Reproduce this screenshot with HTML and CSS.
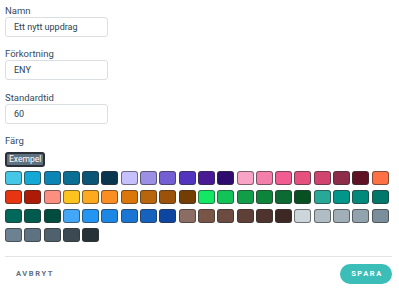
FILE: index.html
```html
<!DOCTYPE html>
<html lang="sv">
<head>
<meta charset="utf-8">
<link rel="stylesheet" href="styles.css">
</head>
<body>
<div class="form">
  <div class="group">
    <label class="label">Namn</label>
    <div class="input">Ett nytt uppdrag</div>
  </div>
  <div class="group">
    <label class="label">Förkortning</label>
    <div class="input">ENY</div>
  </div>
  <div class="group">
    <label class="label">Standardtid</label>
    <div class="input">60</div>
  </div>
  <div class="color-group">
    <label class="label">Färg</label>
    <div class="example">Exempel</div>
    <div class="swatches" id="sw"></div>
  </div>
  <div class="divider"></div>
  <div class="footer">
    <button class="btn-cancel">AVBRYT</button>
    <button class="btn-save">SPARA</button>
  </div>
</div>
<script>
var colors = [
"#45c8e8","#14a8d6","#0a85b5","#0b6f94","#0b5576","#0b3650","#c6c0fc","#9c90e4","#735fd3","#5234bf","#4a1a96","#2e0b6e","#f9a3c6","#f57fab","#f15c91","#e6507f","#d14470","#8e2d4a","#5f1226","#fe7145",
"#e63510","#ad1a05","#fb8f82","#fec31f","#fdaa1f","#fb8e22","#db770a","#b9650b","#9c5208","#743d04","#12e864","#12c458","#129e49","#0c853a","#0b6b33","#075022","#28a897","#01968a","#018a7c","#00796b",
"#00695c","#005a4d","#004d40","#43a6f6","#2396f3","#1e87e4","#1976d3","#1563bf","#0c46a0","#8c6d63","#795548","#6c4b41","#5e4036","#4f342e","#3e2824","#cdd6da","#b0bdc4","#a1b0b8","#91a3ad","#7a8e9b",
"#6c8292","#5e7282","#4f616d","#3b4a52","#263238"];
var sw = document.getElementById('sw');
colors.forEach(function(c){
  var d = document.createElement('div');
  d.className = 'swatch';
  d.style.background = c;
  sw.appendChild(d);
});
</script>
</body>
</html>
```
FILE: styles.css
```css
html, body {
  margin: 0;
  padding: 0;
  background: #fff;
}
body {
  font-family: Roboto, "Liberation Sans", sans-serif;
}
.form {
  padding: 4.5px 7px 0 5px;
}
.group {
  margin-bottom: 11.5px;
}
.label {
  display: block;
  font-size: 9.5px;
  line-height: 12px;
  color: #34495e;
}
.input {
  box-sizing: border-box;
  width: 103px;
  height: 20px;
  border: 1px solid #dcdfe2;
  border-radius: 3px;
  padding-left: 8px;
  font-size: 9px;
  line-height: 18px;
  color: #2c3e50;
}
.example {
  display: inline-block;
  box-sizing: border-box;
  margin-top: 4px;
  height: 14.5px;
  padding: 0 2px;
  background: #5f7281;
  border: 2px solid #2b3036;
  border-radius: 3px;
  color: #fff;
  font-size: 8.5px;
  line-height: 10.5px;
}
.swatches {
  display: grid;
  grid-template-columns: repeat(20, 17px);
  column-gap: 2.3px;
  row-gap: 5.5px;
  margin-top: 4.5px;
}
.swatch {
  box-sizing: border-box;
  height: 13.5px;
  border: 1px solid rgba(50, 50, 50, 0.6);
  border-radius: 3px;
}
.divider {
  margin-top: 14px;
  height: 1px;
  background: #e2e4e6;
}
.footer {
  display: flex;
  justify-content: space-between;
  align-items: center;
  padding-top: 7px;
}
.btn-cancel {
  border: none;
  background: none;
  padding: 0 0 0 11px;
  font-family: Roboto, "Liberation Sans", sans-serif;
  font-weight: 700;
  font-size: 7.5px;
  letter-spacing: 1.6px;
  color: #5f6f80;
}
.btn-save {
  border: none;
  background: #3bbdb8;
  width: 52px;
  height: 20px;
  border-radius: 10px;
  font-family: Roboto, "Liberation Sans", sans-serif;
  font-weight: 700;
  font-size: 7.5px;
  letter-spacing: 1.6px;
  color: #fff;
  padding: 0 0 0 2px;
}
```
